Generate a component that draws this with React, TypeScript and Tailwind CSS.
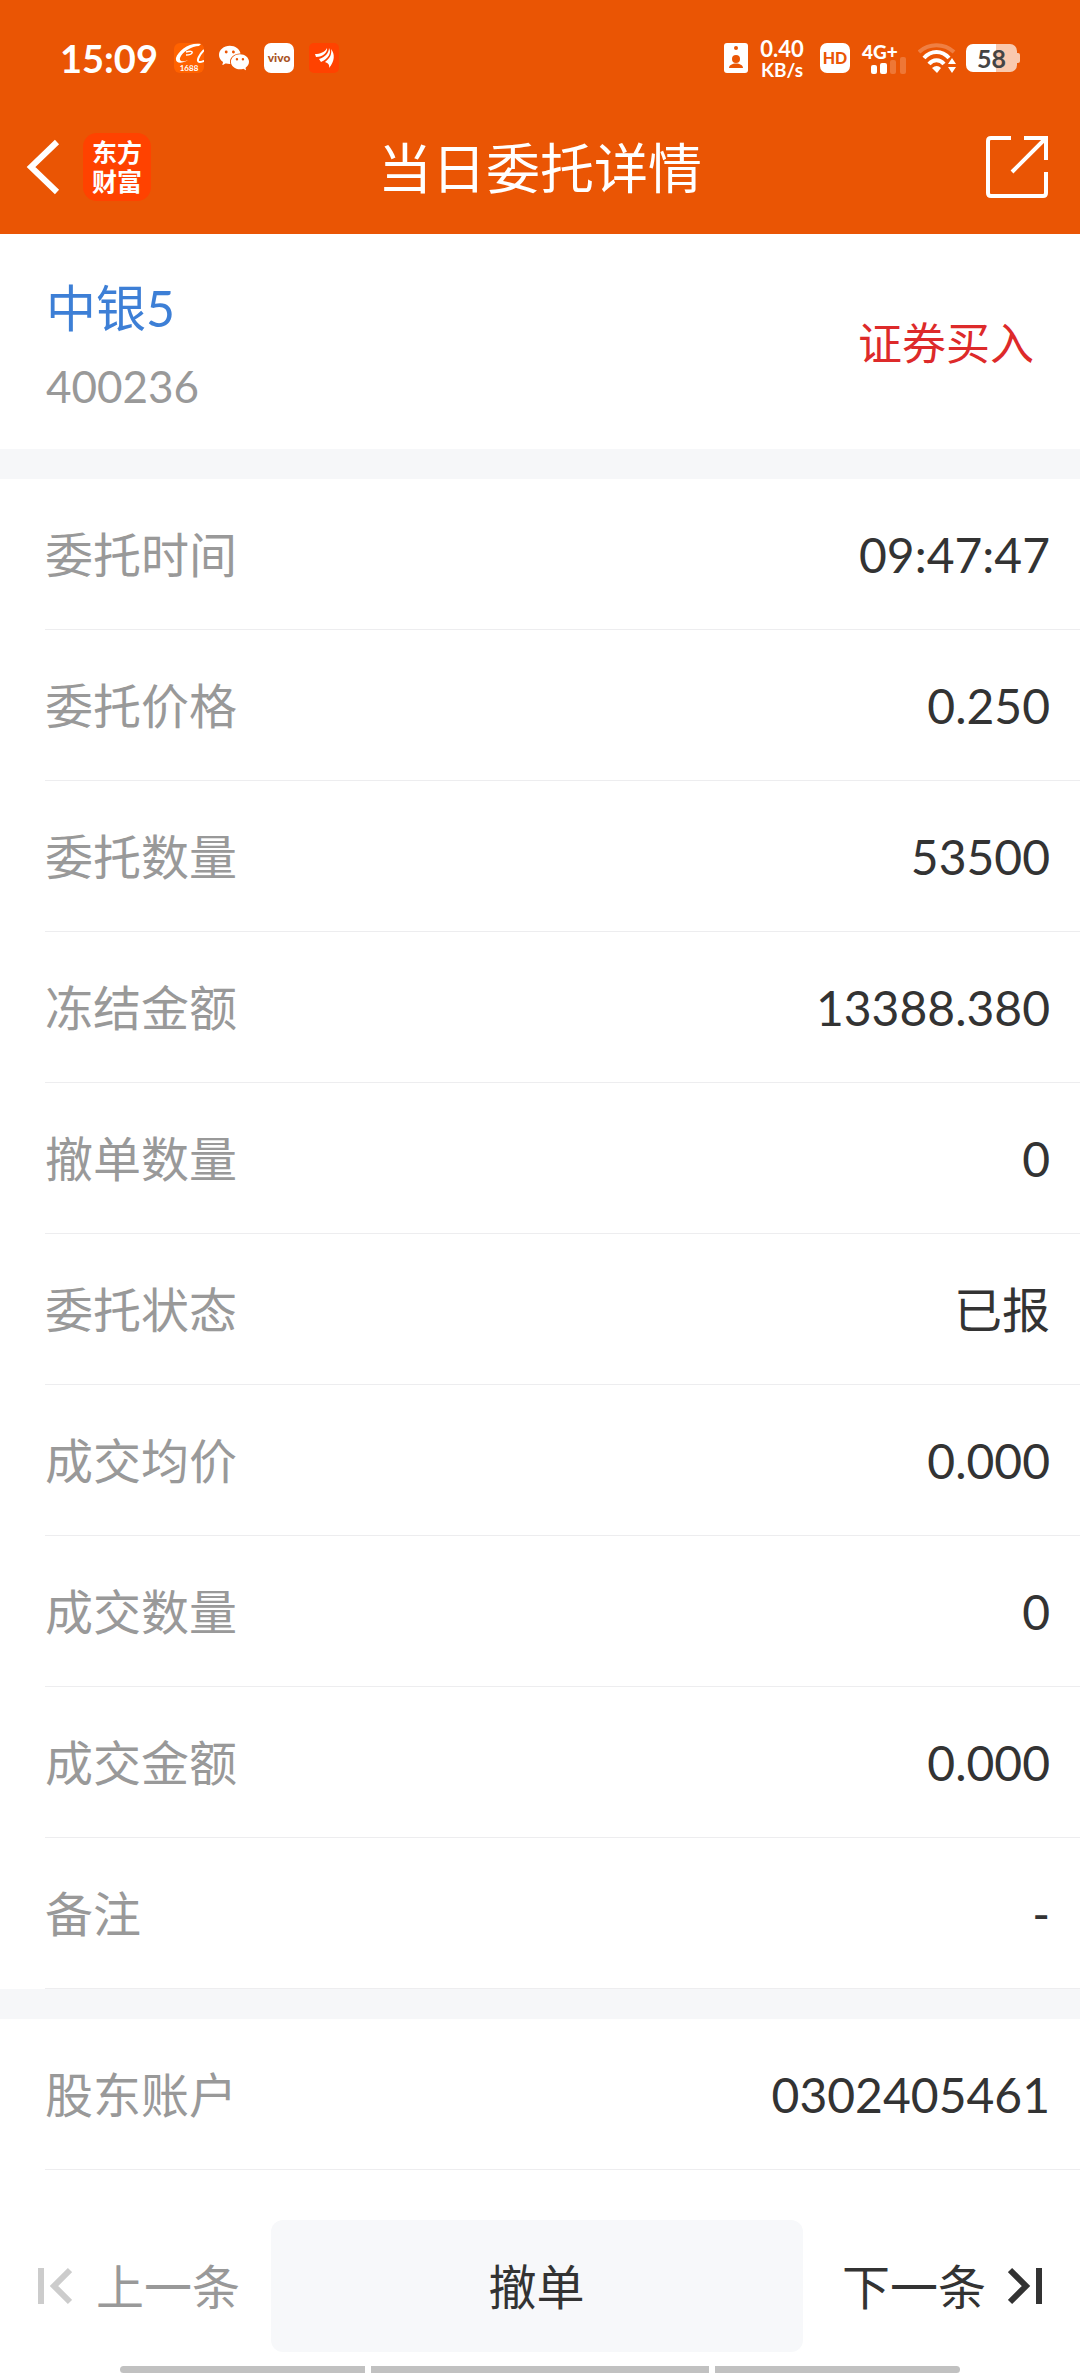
import type { ReactNode } from "react";
import { IoLogoWechat } from "react-icons/io5";

const orderRows = [
  { label: "委托时间", value: "09:47:47" },
  { label: "委托价格", value: "0.250" },
  { label: "委托数量", value: "53500" },
  { label: "冻结金额", value: "13388.380" },
  { label: "撤单数量", value: "0" },
  { label: "委托状态", value: "已报" },
  { label: "成交均价", value: "0.000" },
  { label: "成交数量", value: "0" },
  { label: "成交金额", value: "0.000" },
  { label: "备注", value: "-" },
];

const accountRows = [{ label: "股东账户", value: "0302405461" }];

function StatusBar() {
  return (
    <div className="flex h-[116px] items-center justify-between pr-[60px] pl-[60px]">
      <div className="flex items-center">
        <span className="w-[98px] text-[38px] leading-[48px] font-bold whitespace-nowrap">15:09</span>
        <div className="ml-4 flex items-center gap-[15px]">
          <svg width="30" height="30" viewBox="0 0 30 30">
            <rect width="30" height="30" rx="6" fill="#ff6200" />
            <path
              d="M27 1C15-1 4 8 2 15c-1 6 6 6 12 2-4 2-9 2-8-2C8 9 18 3 25 3z"
              fill="#fff"
            />
            <path d="M12 9c4-1 7-1 6 1s-4 2-6 2" fill="none" stroke="#fff" strokeWidth="1.5" />
            <path d="M30 7c-4 4-9 12-4 12 2 0 3-1 4-1" fill="none" stroke="#fff" strokeWidth="2" />
            <text x="15" y="28" fontSize="8" fontWeight="700" textAnchor="middle" fill="#fff">1688</text>
          </svg>
          <IoLogoWechat className="size-[30px]" />
          <div className="flex size-[30px] items-center justify-center rounded-[7px] bg-white text-[12px] leading-[16px] font-black text-[#a8541f]">
            vivo
          </div>
          <svg width="30" height="30" viewBox="0 0 30 30">
            <rect width="30" height="30" rx="5" fill="#ff4200" />
            <g fill="#fff">
              <path d="M6 11c5 0 10-2 12-6 1 4-4 9-11 9z" />
              <path d="M10 16c6-2 10-6 10-11 3 5-1 11-8 14z" />
              <path d="M16 19c5-4 7-8 6-13 4 5 4 12-2 19 1-3-1-5-4-6z" />
            </g>
          </svg>
        </div>
      </div>
      <div className="flex items-center">
        <svg width="24" height="30" viewBox="0 0 24 30">
          <rect width="24" height="30" rx="3" fill="#fff" />
          <circle cx="12" cy="5" r="2" fill="#ea5504" />
          <circle cx="12" cy="16" r="4" fill="#ea5504" />
          <path d="M5 25c0-6 14-6 14 0z" fill="#ea5504" />
        </svg>
        <div className="ml-2 w-[52px] text-center font-bold whitespace-nowrap">
          <div className="text-[22px] leading-[22px]">0.40</div>
          <div className="text-[19px] leading-[19px]">KB/s</div>
        </div>
        <div className="ml-3 flex size-[30px] items-center justify-center rounded-[7px] bg-white text-[16px] leading-[20px] font-black text-[#ea5504]">
          HD
        </div>
        <div className="ml-3 flex w-[44px] flex-col">
          <span className="text-[19px] leading-[18px] font-black">4G+</span>
          <svg className="-mt-1" width="44" height="17" viewBox="0 0 44 17">
            <rect x="9" y="8" width="6" height="9" rx="2" fill="#fff" />
            <rect x="18" y="6" width="7" height="11" rx="2" fill="#fff" />
            <rect x="28" y="3" width="6" height="14" rx="2" fill="#fff" opacity="0.2" />
            <rect x="38" y="0" width="6" height="17" rx="2" fill="#fff" opacity="0.2" />
          </svg>
        </div>
        <svg className="ml-3" width="38" height="30" viewBox="0 0 38 30">
          <g fill="none" stroke="#fff" strokeWidth="4">
            <path d="M1 9c10-9 25-9 35 0" opacity="0.25" />
            <path d="M6 15c7-8 18-8 25 0" />
            <path d="M11 21c4-5 11-5 15 0" />
          </g>
          <path d="M14 25q5-4 9 0l-4 5z" fill="#fff" />
          <path d="M30 21l4-6 4 6zM30 24l4 6 4-6z" fill="#fff" />
        </svg>
        <div className="ml-[10px] flex items-center">
          <div className="h-[28px] w-[51px] rounded-[7px] bg-linear-to-r from-white from-58% to-[#f9c9ae] to-58% text-center text-[25px] leading-[28px] font-bold text-[#444]">
            58
          </div>
          <div className="h-[10px] w-[3px] rounded-r-[2px] bg-[#f9c9ae]" />
        </div>
      </div>
    </div>
  );
}

function Header() {
  return (
    <header className="bg-[#ea5504] text-white">
      <StatusBar />
      <div className="grid h-[118px] grid-cols-[1fr_auto_1fr] items-center px-[26px] pb-[16px]">
        <div className="flex items-center gap-[23px]">
          <button type="button" aria-label="返回">
            <svg width="34" height="56" viewBox="0 0 34 56" fill="none" stroke="#fff" strokeWidth="6">
              <path d="M31 3 5 28l26 25" />
            </svg>
          </button>
          <div className="flex size-[68px] flex-col items-center justify-center rounded-[14px] bg-[#ff4200] text-[25px] leading-[29px] font-bold">
            <span>东方</span>
            <span>财富</span>
          </div>
        </div>
        <h1 className="pt-1 text-[54px] leading-[64px]">当日委托详情</h1>
        <button type="button" aria-label="分享" className="justify-self-end pr-[5px]">
          <svg width="64" height="64" viewBox="0 0 64 64" fill="none" stroke="#fff" strokeWidth="4">
            <path d="M26 3H6Q3 3 3 6v52q0 3 3 3h52q3 0 3-3V37" />
            <path d="M39 3h22v22M61 3 27 37" />
          </svg>
        </button>
      </div>
    </header>
  );
}

function DetailList({ rows }: { rows: { label: string; value: string }[] }) {
  return (
    <dl>
      {rows.map((row) => (
        <div key={row.label} className="pl-[45px]">
          <div className="flex h-[151px] items-center justify-between border-b border-[#ededef] pt-[2px] pr-[30px]">
            <dt className="text-[48px] leading-[64px] text-[#999]">{row.label}</dt>
            <dd className="text-[48px] leading-[64px] text-[#333]">{row.value}</dd>
          </div>
        </div>
      ))}
    </dl>
  );
}

function NavButton({ children, className }: { children: ReactNode; className: string }) {
  return (
    <button type="button" className={`flex items-center text-[48px] leading-[64px] whitespace-nowrap ${className}`}>
      {children}
    </button>
  );
}

export default function App() {
  return (
    <div className="flex min-h-screen flex-col bg-white font-['Lato','Noto_Sans_CJK_SC',sans-serif]">
      <Header />
      <main>
        <section className="flex h-[215px] items-center justify-between px-[46px]">
          <div className="pt-2">
            <h2 className="text-[50px] leading-[80px] text-[#3d7fd6]">中银5</h2>
            <p className="text-[44px] leading-[76px] text-[#999]">400236</p>
          </div>
          <span className="pt-[3px] text-[44px] leading-[64px] text-[#dd2a2a]">证券买入</span>
        </section>
        <div className="h-[30px] bg-[#f6f7f9]" />
        <DetailList rows={orderRows} />
        <div className="h-[30px] bg-[#f6f7f9]" />
        <DetailList rows={accountRows} />
      </main>
      <footer className="mt-auto">
        <div className="flex h-[132px] items-stretch">
          <NavButton className="flex-[270] pl-[38px] text-[#999]">
            <svg width="34" height="38" viewBox="0 0 34 38" fill="none" stroke="#ccc" strokeWidth="6">
              <path d="M3 1v36M32 3 16 19l16 16" />
            </svg>
            <span className="ml-6 pt-[2px]">上一条</span>
          </NavButton>
          <button type="button" className="w-[532px] rounded-xl bg-[#f7f8fa] pt-[2px] text-[48px] leading-[64px] text-[#333]">
            撤单
          </button>
          <NavButton className="flex-[278] justify-end pr-[38px] text-[#333]">
            <span className="mr-[22px] pt-[2px]">下一条</span>
            <svg width="34" height="38" viewBox="0 0 34 38" fill="none" stroke="#333" strokeWidth="6">
              <path d="M31 1v36M2 3l16 16L2 35" />
            </svg>
          </NavButton>
        </div>
        <div className="mt-[14px] mb-[3px] flex gap-[6px] px-[120px]">
          <div className="h-[7px] flex-[245] rounded-l-full bg-[#c1c1c1]" />
          <div className="h-[7px] flex-[338] bg-[#c1c1c1]" />
          <div className="h-[7px] flex-[245] rounded-r-full bg-[#c1c1c1]" />
        </div>
      </footer>
    </div>
  );
}
